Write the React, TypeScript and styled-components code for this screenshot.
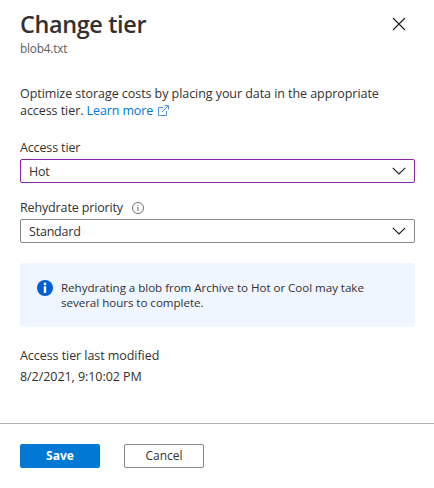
import React from 'react';
import styled, { createGlobalStyle } from 'styled-components';

const GlobalStyle = createGlobalStyle`
  * { box-sizing: border-box; }
  body {
    margin: 0;
    background: #fff;
    color: #323130;
    font-family: "Open Sans", "Noto Sans", sans-serif;
    font-size: 12.5px;
    letter-spacing: -0.06px;
    overflow: hidden;
  }
`;

const Panel = styled.section`
  display: flex;
  flex-direction: column;
  width: 434px;
  height: 488px;
`;

const Header = styled.header`
  display: flex;
  justify-content: space-between;
  align-items: flex-start;
  height: 85px;
  padding: 8px 28px 0 20px;
`;

const Title = styled.h1`
  margin: 0;
  font-size: 23.4px;
  line-height: 32px;
  font-weight: 600;
  letter-spacing: -0.35px;
  white-space: nowrap;
`;

const Subtitle = styled.div`
  font-size: 11.8px;
  line-height: 16px;
  letter-spacing: -0.2px;
  color: #605e5c;
`;

const IconButton = styled.button`
  display: flex;
  padding: 0;
  margin-top: 9px;
  border: 0;
  background: none;
`;

const Body = styled.main`
  display: flex;
  flex-direction: column;
  width: 415px;
  height: 338px;
  padding-left: 20px;
`;

const Intro = styled.p`
  margin: 0 0 18px;
  line-height: 17px;
  white-space: nowrap;
`;

const Link = styled.a`
  color: #0078d4;
  letter-spacing: -0.12px;
  svg { margin-left: 5px; vertical-align: -1px; }
`;

const Label = styled.label`
  display: flex;
  align-items: center;
  height: 20px;
  margin-bottom: 2px;
  padding-top: 1px;
  letter-spacing: -0.14px;
  svg { margin-left: 9px; }
`;

const Select = styled.div<{ $active?: boolean }>`
  display: flex;
  align-items: center;
  justify-content: space-between;
  height: 24px;
  margin-bottom: ${(p) => (p.$active ? 14 : 20)}px;
  padding: 0 8px;
  border: 1px solid ${(p) => (p.$active ? '#8a25a5' : '#8a8886')};
  border-radius: 2px;
  letter-spacing: -0.2px;
`;

const Notice = styled.div`
  display: flex;
  gap: 8px;
  height: 64px;
  padding: 17px 17px;
  border-radius: 3px;
  background: #eff6ff;
  svg { flex: none; }
`;

const NoticeText = styled.div`
  font-size: 11.6px;
  line-height: 15px;
  letter-spacing: -0.04px;
  white-space: nowrap;
`;

const Detail = styled.div`
  margin-top: 18px;
  line-height: 21px;
`;

const Footer = styled.footer`
  display: flex;
  gap: 24px;
  height: 65px;
  padding: 20px;
  border-top: 1px solid #b3b0ad;
`;

const Button = styled.button<{ $primary?: boolean }>`
  width: 80px;
  height: 24px;
  padding: 0 0 1px;
  border: 1px solid ${(p) => (p.$primary ? '#0078d4' : '#8a8886')};
  border-radius: 2px;
  background: ${(p) => (p.$primary ? '#0078d4' : '#fff')};
  color: ${(p) => (p.$primary ? '#fff' : '#323130')};
  font: ${(p) => (p.$primary ? 700 : 400)} 12px/20px "Open Sans", sans-serif;
`;

const CloseIcon = () => (
  <svg width="14" height="14" viewBox="0 0 14 14" fill="none" stroke="#201f1e" strokeWidth="1.15">
    <path d="M1 1l12 12M13 1L1 13" />
  </svg>
);

const ChevronIcon = () => (
  <svg width="14" height="8" viewBox="0 0 14 8" fill="none" stroke="#201f1e" strokeWidth="1.2">
    <path d="M.8.8L7 7l6.2-6.2" />
  </svg>
);

const ExternalIcon = () => (
  <svg width="11" height="11" viewBox="0 0 11 11" fill="none" stroke="#3f84e0" strokeWidth=".9">
    <path d="M5 2.5H.5v8h8V6M4 7l6-6M6.5.5h4v4" />
  </svg>
);

const InfoOutlineIcon = () => (
  <svg width="12" height="12" viewBox="0 0 12 12" fill="none" stroke="#605e5c">
    <circle cx="6" cy="6" r="5.5" strokeWidth=".9" />
    <path d="M6 5v4M6 3v1" />
  </svg>
);

const InfoSolidIcon = () => (
  <svg width="16" height="16" viewBox="0 0 16 16">
    <circle cx="8" cy="8" r="8" fill="#015cda" />
    <circle cx="8" cy="4" r="1.4" fill="#fff" />
    <path d="M6.8 6.3h2.4V13H6.8z" fill="#fff" />
  </svg>
);

export default function App() {
  return (
    <>
      <GlobalStyle />
      <Panel>
        <Header>
          <div>
            <Title>Change tier</Title>
            <Subtitle>blob4.txt</Subtitle>
          </div>
          <IconButton aria-label="Close"><CloseIcon /></IconButton>
        </Header>
        <Body>
          <Intro>
            Optimize storage costs by placing your data in the appropriate<br />
            access tier. <Link>Learn more<ExternalIcon /></Link>
          </Intro>
          <Label>Access tier</Label>
          <Select $active>Hot<ChevronIcon /></Select>
          <Label>Rehydrate priority<InfoOutlineIcon /></Label>
          <Select>Standard<ChevronIcon /></Select>
          <Notice>
            <InfoSolidIcon />
            <NoticeText>
              Rehydrating a blob from Archive to Hot or Cool may take<br />
              several hours to complete.
            </NoticeText>
          </Notice>
          <Detail>
            <div>Access tier last modified</div>
            <div>8/2/2021, 9:10:02 PM</div>
          </Detail>
        </Body>
        <Footer>
          <Button $primary>Save</Button>
          <Button>Cancel</Button>
        </Footer>
      </Panel>
    </>
  );
}
